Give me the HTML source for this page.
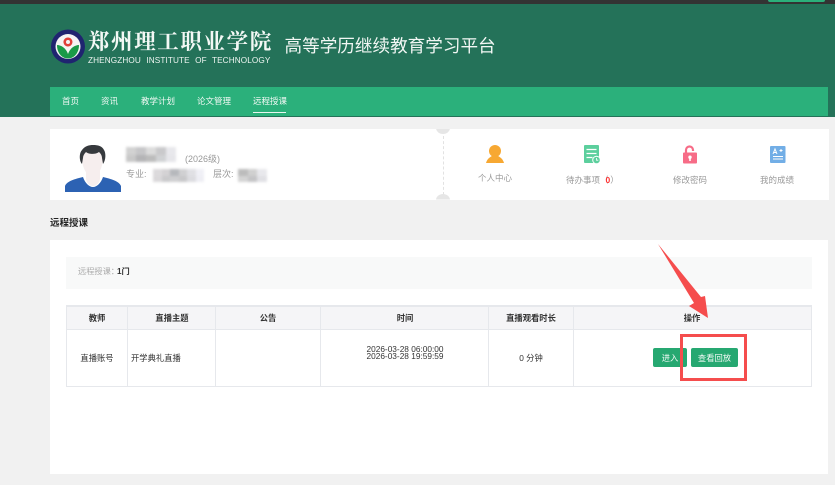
<!DOCTYPE html>
<html lang="zh"><head><meta charset="utf-8"><style>
html,body{margin:0;padding:0;width:835px;height:485px;overflow:hidden;background:#f1f1f1}
body{position:relative;font-family:"Liberation Sans","Noto Sans CJK SC",sans-serif;color:#333}
.a{position:absolute;white-space:nowrap;line-height:1}
.t{filter:blur(.35px)}
.c{transform:translate(-50%,-50%)}
.bl{position:absolute;filter:blur(1.2px);display:grid}
.bl i{display:block}
.b{position:absolute;background:#e6e8ec}
</style></head><body>
<div class="a" style="left:0;top:0;width:835px;height:4px;background:#333"></div>
<div class="a" style="left:768px;top:0;width:57px;height:2px;background:#2bb07b;border-radius:0 0 5px 5px"></div>
<div class="a" style="left:0;top:4px;width:835px;height:113px;background:#247259"></div>

<svg class="a" style="left:50px;top:29px" width="36" height="36" viewBox="0 0 36 36">
<circle cx="18" cy="17.500" r="17" fill="#1f2470"/><circle cx="18" cy="17.500" r="12.500" fill="#f4f4f4"/>
<path d="M7 16c4 0 9 3 11 9c2-6 7-9 11-9c0 8-5 13.500-11 13.500S7 24 7 16z" fill="#199a48"/>
<path d="M18 8.500a4.500 4.500 0 1 1-.1 0z" fill="#e0403a"/><circle cx="18" cy="13" r="2" fill="#f4f4f4"/>
</svg>
<div class="a t" style="left:88px;top:29px;font:700 21.500px/24px 'Noto Serif CJK SC',serif;letter-spacing:1.600px;color:#f3f8f5">郑州理工职业学院</div>
<div class="a t" style="left:88px;top:57px;font-size:8.200px;letter-spacing:.12px;word-spacing:3px;color:#eef5f1">ZHENGZHOU INSTITUTE OF TECHNOLOGY</div>
<div class="a t" style="left:284.500px;top:37.500px;font-size:17.600px;color:#f2f7f4">高等学历继续教育学习平台</div>

<div class="a" style="left:50px;top:87px;width:778px;height:29px;background:#2bb07b"></div>
<div class="a t" style="left:62px;top:97px;font-size:8.500px;color:#f1f8f4">首页</div>
<div class="a t" style="left:101px;top:97px;font-size:8.500px;color:#f1f8f4">资讯</div>
<div class="a t" style="left:141px;top:97px;font-size:8.500px;color:#f1f8f4">教学计划</div>
<div class="a t" style="left:197px;top:97px;font-size:8.500px;color:#f1f8f4">论文管理</div>
<div class="a t" style="left:253px;top:97px;font-size:8.500px;color:#f1f8f4">远程授课</div>
<div class="a" style="left:253px;top:112px;width:33px;height:1px;background:#e8f6ef"></div>

<div class="a" style="left:50px;top:129px;width:779px;height:70.500px;background:#fff"></div>
<svg class="a" style="left:65px;top:144px" width="56" height="48" viewBox="0 0 56 48">
<path d="M21 24h14v10c0 4-3 8-7 8s-7-4-7-8z" fill="#f6eeee"/>
<path d="M17 13c0-7 5-10 11-10s10 3 10 10c0 10-4 19-10.500 19S17 23 17 13z" fill="#f6eeee"/>
<path d="M0 48V42c2-5 10-7 18-9c2 6 6 10 10 10s8-4 10-10c8 2 16 4 18 9v6z" fill="#2c62b3"/>
<path d="M17 20c-3-3-3-11 0-14c3-4 7-5 11-5c5 0 9 1 11 5c2 3 2 10-1 14l-1-6c0-3-2-5-3-6c-4 3-11 2-13 0c-2 2-3 4-3 6z" fill="#36393d"/>
</svg>
<div class="bl" style="left:126px;top:147px;width:50px;height:15px;grid-template-columns:repeat(5,1fr);grid-template-rows:repeat(2,1fr)">
<i style="background:#d2d2d2"></i><i style="background:#c6c6c8"></i><i style="background:#dcdcdc"></i><i style="background:#c9c9cb"></i><i style="background:#e8e8ec"></i>
<i style="background:#c8c8c8"></i><i style="background:#b4b4b6"></i><i style="background:#bcbcbc"></i><i style="background:#d0d2d4"></i><i style="background:#e6e6ea"></i></div>
<div class="a t" style="left:185px;top:154.500px;font-size:9px;color:#999">(2026级)</div>
<div class="a t" style="left:126px;top:170px;font-size:9px;color:#999">专业:</div>
<div class="bl" style="left:153px;top:169px;width:51px;height:13px;grid-template-columns:repeat(6,1fr);grid-template-rows:repeat(2,1fr)">
<i style="background:#dcdadc"></i><i style="background:#d4d2d4"></i><i style="background:#b6b8bc"></i><i style="background:#d0d0d2"></i><i style="background:#e0e0e4"></i><i style="background:#f0f0f6"></i>
<i style="background:#dad8da"></i><i style="background:#cacacc"></i><i style="background:#cfcfd1"></i><i style="background:#c8c8ca"></i><i style="background:#dcdce0"></i><i style="background:#eeeef4"></i></div>
<div class="a t" style="left:213px;top:170px;font-size:9px;color:#999">层次:</div>
<div class="bl" style="left:238px;top:169px;width:29px;height:13px;grid-template-columns:repeat(3,1fr);grid-template-rows:repeat(2,1fr)">
<i style="background:#bcbcbc"></i><i style="background:#d0d0d0"></i><i style="background:#e8e8ec"></i>
<i style="background:#d4d4d4"></i><i style="background:#c4c4c6"></i><i style="background:#e0e0e4"></i></div>

<div class="a" style="left:443px;top:136px;height:59px;border-left:1px dashed #e2e2e2"></div>
<div class="a" style="left:436px;top:122px;width:14px;height:12px;border-radius:50%;background:#e6e6e6;clip-path:inset(7px 0 0 0)"></div>
<div class="a" style="left:436px;top:194px;width:14px;height:12px;border-radius:50%;background:#e6e6e6;clip-path:inset(0 0 6.500px 0)"></div>

<svg class="a" style="left:486px;top:144px" width="18" height="20" viewBox="0 0 18 20">
<path d="M0 19c1-4 4-6 6-7h6c2 1 5 3 6 7z" fill="#f7a832"/><circle cx="9" cy="7" r="6" fill="#f7a832"/></svg>
<div class="a t c" style="left:495px;top:177.500px;font-size:8.500px;color:#999">个人中心</div>

<svg class="a" style="left:584px;top:145px" width="17" height="20" viewBox="0 0 17 20">
<rect x="0" y="0" width="15" height="18" rx="1" fill="#5ccf9d"/>
<path d="M2.500 4.500h10M2.500 8.500h10M2.500 12.500h6" stroke="#fff" stroke-width="1.300"/>
<circle cx="12.500" cy="15" r="3.800" fill="#5ccf9d" stroke="#fff"/><path d="M12.500 13v2.200h1.800" stroke="#fff" stroke-width=".8" fill="none"/></svg>
<div class="a t" style="left:566px;top:175.500px;font-size:8.500px;color:#999">待办事项（<b style="color:#f33;font-weight:700;margin-left:-3px">0</b>）</div>

<svg class="a" style="left:683px;top:145px" width="14" height="19" viewBox="0 0 14 19">
<path d="M3 9V5a3.500 3.500 0 0 1 7 0v1" fill="none" stroke="#f76c87" stroke-width="2.200"/>
<rect x="0" y="7.500" width="14" height="11" rx="1" fill="#f76c87"/>
<circle cx="7" cy="12.200" r="1.700" fill="#fff"/><rect x="6.200" y="12.500" width="1.600" height="3.500" fill="#fff"/></svg>
<div class="a t c" style="left:690px;top:179.500px;font-size:8.500px;color:#999">修改密码</div>

<svg class="a" style="left:770px;top:145.500px" width="16" height="18" viewBox="0 0 16 18">
<rect width="15.500" height="17" rx="1" fill="#72aee6"/>
<path d="M3 8l2-5 2 5M3.800 6.500h2.400M9.500 4.500h3M11 3v3M3 10.500h10M3 13h10" stroke="#fff" stroke-width="1" fill="none"/></svg>
<div class="a t c" style="left:777px;top:179.500px;font-size:8.500px;color:#999">我的成绩</div>

<div class="a t" style="left:50px;top:219px;font-size:9.500px;font-weight:700;color:#222">远程授课</div>

<div class="a" style="left:50px;top:240px;width:778px;height:234px;background:#fff"></div>
<div class="a" style="left:66px;top:257px;width:746px;height:31.500px;background:#f8f9f9"></div>
<div class="a t" style="left:78px;top:268px;font-size:8.200px;color:#aaa">远程授课：<b style="color:#333;margin-left:-2px">1门</b></div>

<div class="a" style="left:66px;top:306px;width:746px;height:23px;background:#f5f5f7"></div>
<div class="b" style="left:66px;top:305px;width:746px;height:1.500px"></div>
<div class="b" style="left:66px;top:329px;width:746px;height:1px"></div>
<div class="b" style="left:66px;top:386px;width:746px;height:1px"></div>
<div class="b" style="left:66px;top:305px;width:1px;height:82px"></div>
<div class="b" style="left:127px;top:305px;width:1px;height:82px"></div>
<div class="b" style="left:215px;top:305px;width:1px;height:82px"></div>
<div class="b" style="left:320px;top:305px;width:1px;height:82px"></div>
<div class="b" style="left:488px;top:305px;width:1px;height:82px"></div>
<div class="b" style="left:573px;top:305px;width:1px;height:82px"></div>
<div class="b" style="left:811px;top:305px;width:1px;height:82px"></div>

<div class="a t c" style="left:97px;top:317.500px;font-size:8.300px;font-weight:700">教师</div>
<div class="a t c" style="left:172px;top:317.500px;font-size:8.300px;font-weight:700">直播主题</div>
<div class="a t c" style="left:268px;top:317.500px;font-size:8.300px;font-weight:700">公告</div>
<div class="a t c" style="left:405px;top:317.500px;font-size:8.300px;font-weight:700">时间</div>
<div class="a t c" style="left:531px;top:317.500px;font-size:8.300px;font-weight:700">直播观看时长</div>
<div class="a t c" style="left:692px;top:317.500px;font-size:8.300px;font-weight:700">操作</div>

<div class="a t c" style="left:97px;top:358px;font-size:8.300px">直播账号</div>
<div class="a t" style="left:131px;top:353.500px;font-size:8.300px">开学典礼直播</div>
<div class="a t c" style="left:405px;top:348.500px;font-size:8.300px">2026-03-28 06:00:00</div>
<div class="a t c" style="left:405px;top:355.500px;font-size:8.300px">2026-03-28 19:59:59</div>
<div class="a t c" style="left:531px;top:358px;font-size:8.300px">0 分钟</div>

<div class="a" style="left:653px;top:348px;width:34px;height:19px;background:#26a871;border-radius:2px"></div>
<div class="a t c" style="left:670px;top:358px;font-size:8.300px;color:#f2faf6">进入</div>
<div class="a" style="left:691px;top:348px;width:47px;height:19px;background:#26a871;border-radius:2px"></div>
<div class="a t c" style="left:714.500px;top:358px;font-size:8.300px;color:#f2faf6">查看回放</div>

<div class="a" style="left:680px;top:334px;width:61px;height:41px;border:3px solid #f54d4d"></div>
<svg class="a" style="left:650px;top:240px" width="70" height="85" viewBox="0 0 70 85">
<polygon points="8,4 51,57 55,56 58,78 39,66 44,63" fill="#f54d4d"/></svg>
</body></html>
